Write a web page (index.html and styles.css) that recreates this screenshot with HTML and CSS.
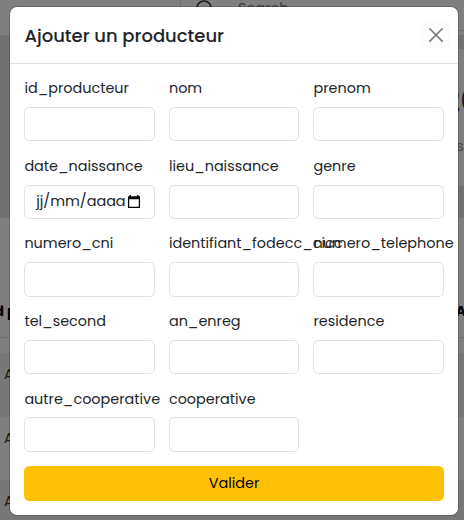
FILE: index.html
```html
<!DOCTYPE html>
<html lang="fr">
<head>
<meta charset="utf-8">
<title>Producteurs</title>
<link rel="stylesheet" href="styles.css">
</head>
<body>
<div class="page">
  <header class="topbar">
    <div class="search">
      <svg width="20" height="20" viewBox="0 0 20 20" fill="none" stroke="#15191c" stroke-width="1.6"><circle cx="8" cy="8" r="7"/><path d="M13 13l5 5"/></svg>
      <span>Search</span>
    </div>
  </header>
  <section class="hero">
    <div class="stat"><b>20</b><span>s</span></div>
  </section>
  <section class="table">
    <div class="row head"><span>Id producteur</span><span>A</span></div>
    <div class="rule"></div>
    <div class="row odd"><span>A</span></div>
    <div class="row"><span>A</span></div>
    <div class="row odd"><span>A</span></div>
  </section>
</div>
<div class="modal">
  <div class="modal-header">
    <h5>Ajouter un producteur</h5>
    <button class="close" aria-label="Fermer"><svg width="14" height="14" viewBox="0 0 14 14" stroke="#808080" stroke-width="1.7" stroke-linecap="round"><path d="M.9.9l12.2 12.2M13.1.9L.9 13.1"/></svg></button>
  </div>
  <form class="modal-body">
    <div class="field"><label>id_producteur</label><div class="input"></div></div>
    <div class="field"><label>nom</label><div class="input"></div></div>
    <div class="field"><label>prenom</label><div class="input"></div></div>
    <div class="field"><label>date_naissance</label><div class="input date"><span>jj/mm/aaaa</span><svg width="12" height="13" viewBox="0 0 12 13"><path fill="#000" fill-rule="evenodd" d="M1.5 0h1.4v1.2h6.2V0h1.4v1.2H12V13H0V1.2h1.5zM1.2 4.3v7.4h9.6V4.3z"/></svg></div></div>
    <div class="field"><label>lieu_naissance</label><div class="input"></div></div>
    <div class="field"><label>genre</label><div class="input"></div></div>
    <div class="field"><label>numero_cni</label><div class="input"></div></div>
    <div class="field"><label>identifiant_fodecc_cicc</label><div class="input"></div></div>
    <div class="field"><label>numero_telephone</label><div class="input"></div></div>
    <div class="field"><label>tel_second</label><div class="input"></div></div>
    <div class="field"><label>an_enreg</label><div class="input"></div></div>
    <div class="field"><label>residence</label><div class="input"></div></div>
    <div class="field"><label>autre_cooperative</label><div class="input"></div></div>
    <div class="field"><label>cooperative</label><div class="input"></div></div>
    <button class="submit" type="button">Valider</button>
  </form>
</div>
</body>
</html>
```
FILE: styles.css
```css
* { box-sizing: border-box; }
body { margin: 0; font: 400 14.4px/1.5 Poppins, Inter, sans-serif; color: #212529; }
.page { width: 464px; height: 520px; overflow: hidden; background: #7f7f7f; }
.topbar { height: 35px; padding-left: 180px; overflow: hidden; }
.search { width: 320px; height: 51px; margin-top: -20px; padding: 19px 0 0 15px; border: 1px solid #6c6e70; border-radius: 22px; display: flex; gap: 22px; color: #3c3c3c; }
.search svg { flex: none; }
.search span { margin-top: -2px; }
.hero { height: 183px; padding: 14px 0 32px 200px; background: #6f7271; }
.stat { height: 137px; padding: 31px 0 0 243px; background: #7f7f7f; display: flex; flex-direction: column; }
.stat b { font: 500 30px/42px Poppins, Inter, sans-serif; color: #101c30; }
.stat span { margin: 14px 0 0 13px; color: #4c4541; line-height: 20px; font-size: 15px; }
.table { display: flex; flex-direction: column; }
.row { height: 63.5px; flex: none; padding-left: 4px; line-height: 43px; color: #281a10; }
.row.odd { background: #777; }
.row.head { height: 119px; padding: 73px 0 0; display: flex; justify-content: space-between; font-weight: 700; line-height: 40px; color: #000; margin: 0 -2px 0 -10px; }
.rule { height: 16px; border-top: 1px solid #6f7071; }
.modal { position: absolute; left: 9px; top: 6px; width: 450px; height: 510px; background: #fff; background-clip: padding-box; border: 1px solid rgba(0,0,0,.18); border-radius: 8px; }
.modal-header { height: 57px; padding: 0 8px 0 14.4px; border-bottom: 1px solid #dee2e6; display: flex; align-items: center; justify-content: space-between; }
h5 { margin: 0; font-size: 18px; font-weight: 500; line-height: 27px; }
.close { width: 29px; height: 28px; padding: 0; border: 0; border-radius: 5px; background: #fbfdfd; display: grid; place-items: center; }
.modal-body { padding: 14.3px 14.4px; display: grid; grid-template-columns: repeat(3, minmax(0, 1fr)); gap: 14.4px; }
label { display: block; width: max-content; height: 21.6px; margin-bottom: 7.2px; white-space: nowrap; }
.input { height: 34.4px; border: 1px solid #dee2e6; border-radius: 5.4px; background: #fff; }
.date { padding: 0 0 0 10.8px; display: flex; align-items: center; gap: 3px; }
.date span { width: 89px; white-space: nowrap; }
.date svg { margin-top: -1px; }
.submit { grid-column: 1 / -1; height: 34.6px; padding: 0; border: 0; border-radius: 5.4px; background: #ffc107; color: #000; font: inherit; }
```
